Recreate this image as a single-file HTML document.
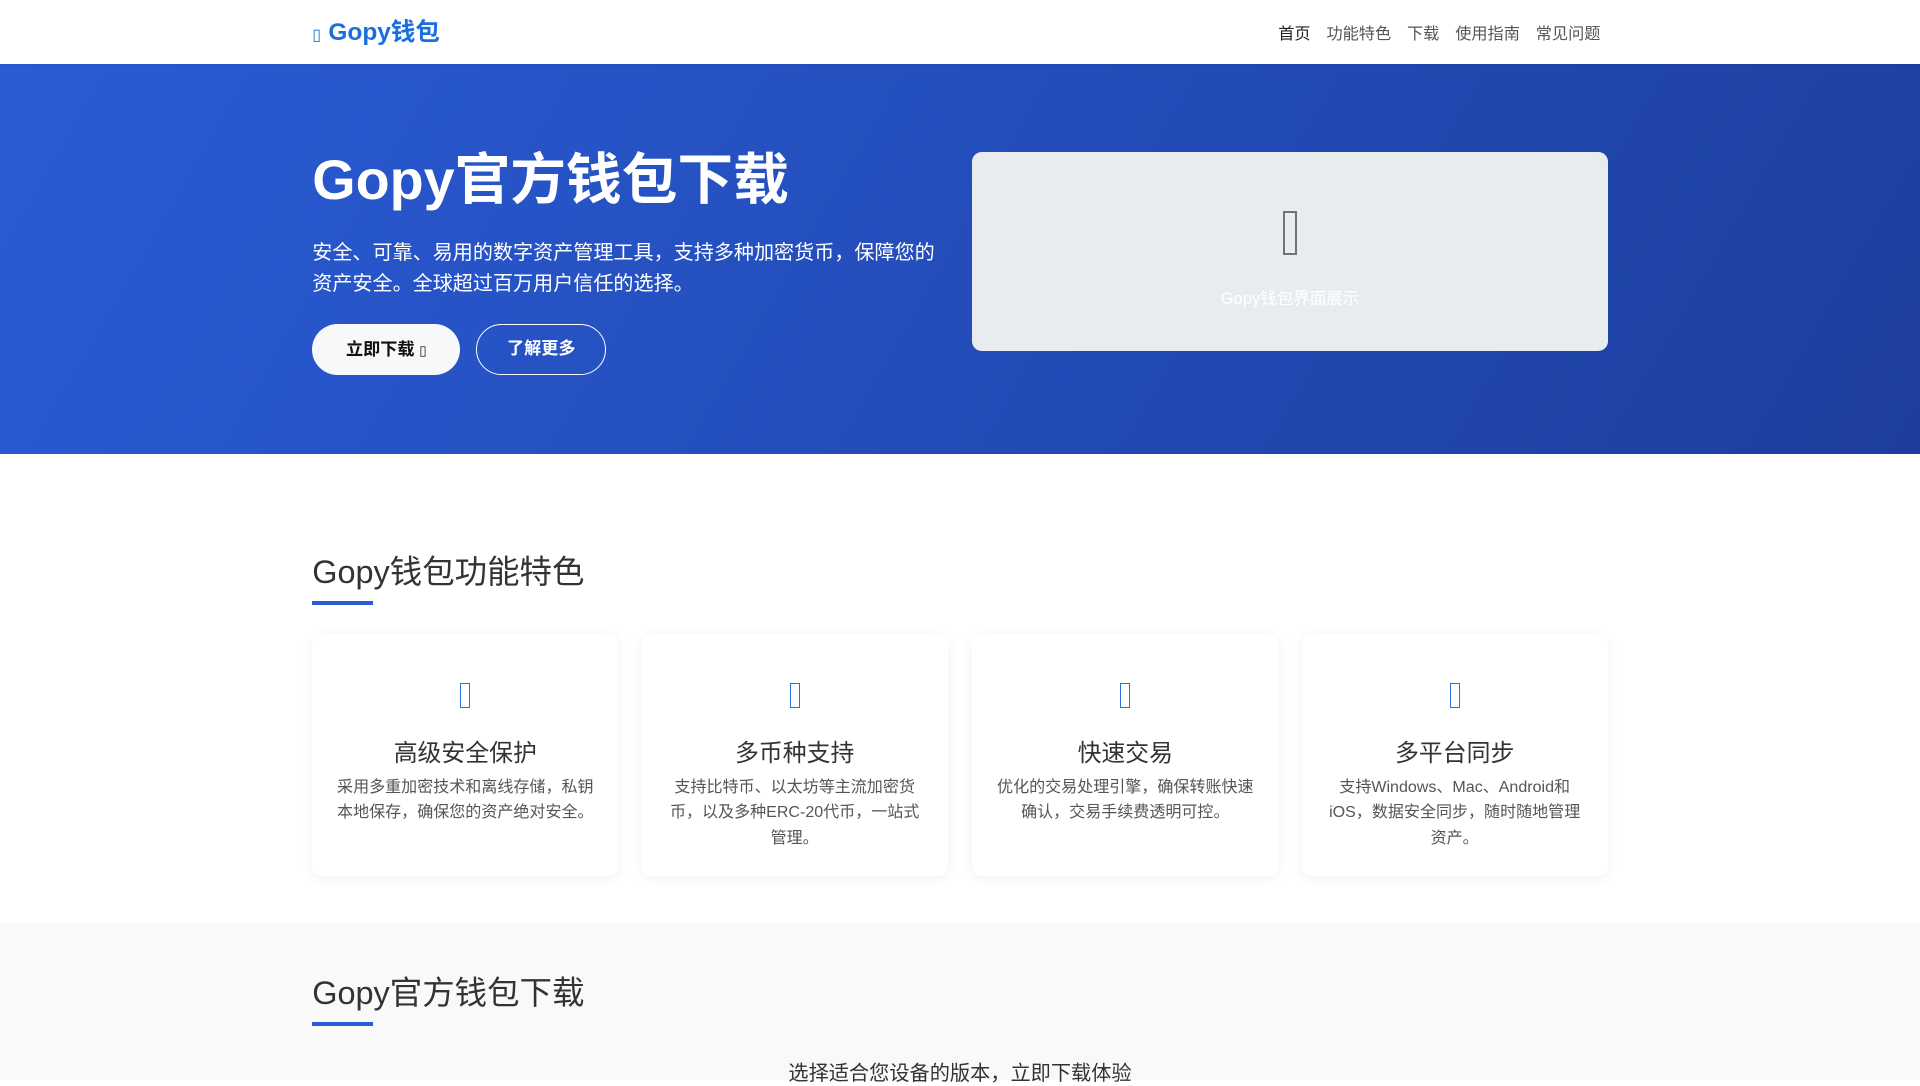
<!DOCTYPE html>
<html><head><meta charset="utf-8"><style>
html,body{margin:0;padding:0}
body{zoom:1.22449;width:1568px;height:882px;overflow:hidden;font-family:"Liberation Sans","Noto Sans CJK SC",sans-serif;color:#333;background:#fff}
.c{width:1058px;margin:0 auto;position:relative}
header{height:52px;background:#fff;box-shadow:0 1px 4px rgba(0,0,0,.08);position:relative;z-index:2}
.logo{position:absolute;left:0;top:11px;font-size:20px;font-weight:bold;color:#1a6fe0}
.logo small{font-size:13px;font-weight:normal;margin-right:6px}
nav{position:absolute;right:6px;top:16px;font-size:13.2px;color:#555}
nav span{margin-left:13px}
nav span:first-child{color:#222}
.hero{height:319px;background:linear-gradient(120deg,#2a5cd6,#1d3e9e)}
.hero h1{position:absolute;left:0;top:58px;margin:0;font-size:45.5px;color:#fff;font-weight:bold}
.hero p{position:absolute;left:0;top:142px;margin:0;width:520px;font-size:16.4px;line-height:26px;color:#fff}
.b1,.b2{position:absolute;top:213px;height:41px;border-radius:21px;font-size:14px;font-weight:bold;line-height:41px;text-align:center}
.b1{left:0;width:121px;background:#f7f8fa;color:#111}
.b2{left:134px;width:106px;border:1px solid #fff;color:#fff;box-sizing:border-box;line-height:39px}
.img{position:absolute;left:539px;top:72px;width:519px;height:163px;background:#e9ecef;border-radius:8px;text-align:center}
.img .ic{margin:48px auto 0;width:12px;height:36px;border:2px solid #6c757d;box-sizing:border-box}
.img div.t{margin-top:25px;color:#fff;font-size:13.5px}
h2{margin:0;font-size:26.5px;font-weight:normal;color:#333;position:absolute;left:0}
.ul{position:absolute;left:0;width:50px;height:3px;background:#2a5cd6}
.card{position:absolute;top:518px;width:250px;height:197px;border-radius:8px;box-shadow:0 2px 10px rgba(0,0,0,.06);text-align:center;background:#fff}
.card .i{margin:40px auto 0;width:8px;height:20px;border:1.5px solid #2a6ee0;box-sizing:border-box}
.card h3{margin:21px 0 0;font-size:19.5px;font-weight:normal;color:#333}
.card p{margin:5px 19px 0;font-size:13.1px;line-height:21px;color:#555}
.sec2{position:absolute;top:754px;left:0;width:1568px;height:128px;background:#f8f9fa}
</style></head><body>
<header><div class="c"><div class="logo"><small>▯</small>Gopy钱包</div><nav><span>首页</span><span>功能特色</span><span>下载</span><span>使用指南</span><span>常见问题</span></nav></div></header>
<div class="hero"><div class="c" style="height:319px">
<h1>Gopy官方钱包下载</h1>
<p>安全、可靠、易用的数字资产管理工具，支持多种加密货币，保障您的资产安全。全球超过百万用户信任的选择。</p>
<div class="b1">立即下载 <span style="font-weight:normal;font-size:11px">▯</span></div><div class="b2">了解更多</div>
<div class="img"><div class="ic"></div><div class="t">Gopy钱包界面展示</div></div>
</div></div>
<div class="c" style="position:absolute;left:255px;top:0;height:882px">
<h2 style="top:446px">Gopy钱包功能特色</h2><div class="ul" style="top:491px"></div>
<div class="card" style="left:0"><div class="i"></div><h3>高级安全保护</h3><p>采用多重加密技术和离线存储，私钥本地保存，确保您的资产绝对安全。</p></div>
<div class="card" style="left:269px"><div class="i"></div><h3>多币种支持</h3><p>支持比特币、以太坊等主流加密货币，以及多种ERC-20代币，一站式管理。</p></div>
<div class="card" style="left:539px"><div class="i"></div><h3>快速交易</h3><p>优化的交易处理引擎，确保转账快速确认，交易手续费透明可控。</p></div>
<div class="card" style="left:808px"><div class="i"></div><h3>多平台同步</h3><p>支持Windows、Mac、Android和iOS，数据安全同步，随时随地管理资产。</p></div>
</div>
<div class="sec2"><div class="c" style="height:128px">
<h2 style="top:36px">Gopy官方钱包下载</h2><div class="ul" style="top:81px"></div>
<div style="position:absolute;top:109px;width:1058px;text-align:center;font-size:16.5px;color:#333">选择适合您设备的版本，立即下载体验</div>
</div></div>
</body></html>
